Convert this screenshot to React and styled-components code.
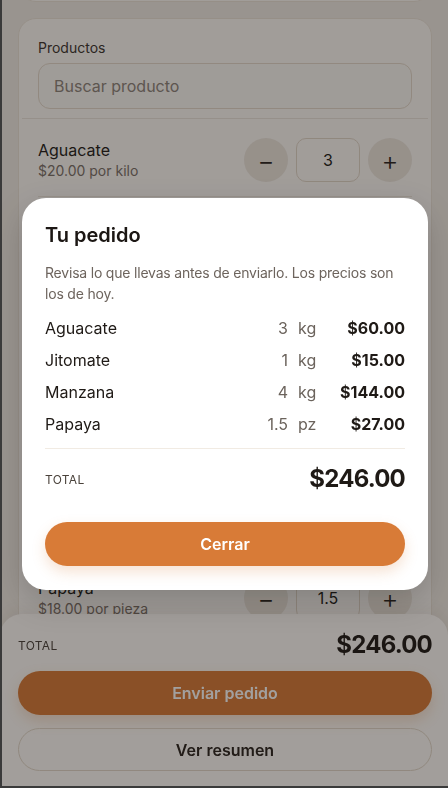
import React from 'react'
import styled, { createGlobalStyle } from 'styled-components'

const GlobalStyle = createGlobalStyle`
  html, body {
    margin: 0;
    padding: 0;
    background: #f1ece5;
    font-family: Inter, "Noto Sans", sans-serif;
    color: #1f1a16;
  }
  * { box-sizing: border-box; }
`

// the page behind the dialog
const Page = styled.div`
  display: flex;
  flex-direction: column;
  gap: 16px;
  padding: 0 16px 200px 18px;
  margin-top: -60px;
`

const Card = styled.div`
  background: #fdfaf6;
  border: 1px solid #ebe3d8;
  border-radius: 18px;
  min-height: ${p => p.$h || 'auto'};
`

const SearchBlock = styled.div`
  padding: 19px 16px 9px;
  border-bottom: 1px solid #ece5dc;
  margin: 0 3px;
`

const Label = styled.div`
  font-size: 14px;
  line-height: 20px;
  color: #3b342e;
  margin-bottom: 5px;
`

const SearchInput = styled.div`
  height: 46px;
  border: 1.5px solid #e4d9cb;
  border-radius: 12px;
  background: #fbf8f4;
  display: flex;
  align-items: center;
  padding: 0 15px;
  font-size: 16px;
  color: #8d847b;
`

const List = styled.div`
  padding: 5px 19px 0;
`

const Row = styled.div`
  display: flex;
  align-items: center;
  justify-content: space-between;
  padding: 14px 0;
  border-bottom: 1px solid #ece5dc;
`

const Name = styled.div`
  font-size: 16px;
  line-height: 22px;
  color: #221c18;
`

const Sub = styled.div`
  font-size: 14px;
  line-height: 20px;
  color: #7a7068;
`

const Controls = styled.div`
  display: flex;
  align-items: center;
  gap: 8px;
`

const Round = styled.div`
  width: 44px;
  height: 44px;
  border-radius: 50%;
  background: #ede6dd;
  display: flex;
  align-items: center;
  justify-content: center;
  font-size: 26px;
  color: #2a2420;
  font-weight: 300;
`

const Qty = styled.div`
  width: 64px;
  height: 44px;
  border: 1.5px solid #e2d7c9;
  border-radius: 10px;
  display: flex;
  align-items: center;
  justify-content: center;
  font-size: 16px;
  color: #221c18;
`

const Sheet = styled.div`
  position: fixed;
  left: 0;
  right: 0;
  bottom: 0;
  background: #fffcf8;
  border-radius: 22px 22px 0 0;
  box-shadow: 0 -4px 16px rgba(60, 40, 20, 0.08);
  padding: 18px 16px 17px 18px;
  display: flex;
  flex-direction: column;
  gap: 13px;
`

const TotalRow = styled.div`
  display: flex;
  align-items: center;
  justify-content: space-between;
`

const TotalLabel = styled.div`
  font-size: 12px;
  letter-spacing: 0.3px;
  color: #4a423b;
`

const TotalValue = styled.div`
  font-size: 24px;
  line-height: 26px;
  font-weight: 700;
  letter-spacing: -0.8px;
  color: #1f1a16;
`

const Button = styled.div`
  height: ${p => (p.$outline ? '43px' : '44px')};
  margin-top: ${p => p.$mt || 0};
  border-radius: 999px;
  display: flex;
  align-items: center;
  justify-content: center;
  font-size: 16px;
  font-weight: 600;
  background: ${p => (p.$outline ? 'transparent' : '#d87b37')};
  color: ${p => (p.$outline ? '#2a231e' : '#fff')};
  border: ${p => (p.$outline ? '1.5px solid #e3d8ca' : 'none')};
  box-shadow: ${p => (p.$outline ? 'none' : '0 6px 14px rgba(216, 123, 55, 0.22)')};
`

const Overlay = styled.div`
  position: fixed;
  inset: 0;
  background: rgba(22, 18, 14, 0.4);
  display: flex;
  align-items: center;
  justify-content: center;
  padding: 0 20px 0 22px;
`

const Modal = styled.div`
  width: 100%;
  background: #fff;
  border-radius: 24px;
  padding: 24px 23px;
  box-shadow: 0 12px 32px rgba(0, 0, 0, 0.18);
`

const Title = styled.div`
  font-size: 20px;
  line-height: 26px;
  font-weight: 600;
  color: #1c1714;
  margin-bottom: 14px;
`

const Desc = styled.div`
  font-size: 14px;
  line-height: 21px;
  letter-spacing: -0.2px;
  color: #6d645d;
  margin-bottom: 8px;
`

const Lines = styled.div`
  display: grid;
  grid-template-columns: 1fr auto 20px 77px;
  column-gap: 10px;
  padding-bottom: 8px;
  border-bottom: 1px solid #f1ebe3;
  margin-bottom: 17px;
`

const Cell = styled.div`
  height: 32px;
  display: flex;
  align-items: center;
  justify-content: ${p => (p.$right ? 'flex-end' : 'flex-start')};
  font-size: 16px;
  white-space: nowrap;
  font-weight: ${p => (p.$bold ? 700 : 400)};
  color: ${p => (p.$muted ? '#6b635c' : '#1f1a16')};
`

const Frame = styled.div`
  position: fixed;
  inset: 0;
  border-left: 2px solid #3a3a3a;
  border-bottom: 2px solid #3a3a3a;
  pointer-events: none;
`

const products = [
  { name: 'Aguacate', price: '$20.00 por kilo', qty: '3' },
  { name: 'Cebolla', price: '$22.00 por kilo', qty: '0' },
  { name: 'Jitomate', price: '$15.00 por kilo', qty: '1' },
  { name: 'Limón', price: '$30.00 por kilo', qty: '0' },
  { name: 'Mango', price: '$40.00 por kilo', qty: '0' },
  { name: 'Manzana', price: '$36.00 por kilo', qty: '4' },
  { name: 'Papaya', price: '$18.00 por pieza', qty: '1.5' },
]

const order = [
  { name: 'Aguacate', qty: '3', unit: 'kg', total: '$60.00' },
  { name: 'Jitomate', qty: '1', unit: 'kg', total: '$15.00' },
  { name: 'Manzana', qty: '4', unit: 'kg', total: '$144.00' },
  { name: 'Papaya', qty: '1.5', unit: 'pz', total: '$27.00' },
]

export default function App() {
  return (
    <>
      <GlobalStyle />
      <Page>
        <Card $h="62px" />
        <Card>
          <SearchBlock>
            <Label>Productos</Label>
            <SearchInput>Buscar producto</SearchInput>
          </SearchBlock>
          <List>
            {products.map(p => (
              <Row key={p.name}>
                <div>
                  <Name>{p.name}</Name>
                  <Sub>{p.price}</Sub>
                </div>
                <Controls>
                  <Round>−</Round>
                  <Qty>{p.qty}</Qty>
                  <Round>+</Round>
                </Controls>
              </Row>
            ))}
          </List>
        </Card>
      </Page>

      <Sheet>
        <TotalRow>
          <TotalLabel>TOTAL</TotalLabel>
          <TotalValue>$246.00</TotalValue>
        </TotalRow>
        <Button>Enviar pedido</Button>
        <Button $outline>Ver resumen</Button>
      </Sheet>

      <Overlay>
        <Modal>
          <Title>Tu pedido</Title>
          <Desc>Revisa lo que llevas antes de enviarlo. Los precios son los de hoy.</Desc>
          <Lines>
            {order.map(o => (
              <React.Fragment key={o.name}>
                <Cell>{o.name}</Cell>
                <Cell $right $muted>{o.qty}</Cell>
                <Cell $muted>{o.unit}</Cell>
                <Cell $right $bold>{o.total}</Cell>
              </React.Fragment>
            ))}
          </Lines>
          <TotalRow>
            <TotalLabel>TOTAL</TotalLabel>
            <TotalValue>$246.00</TotalValue>
          </TotalRow>
          <Button $mt="30px">Cerrar</Button>
        </Modal>
      </Overlay>
      <Frame />
    </>
  )
}
